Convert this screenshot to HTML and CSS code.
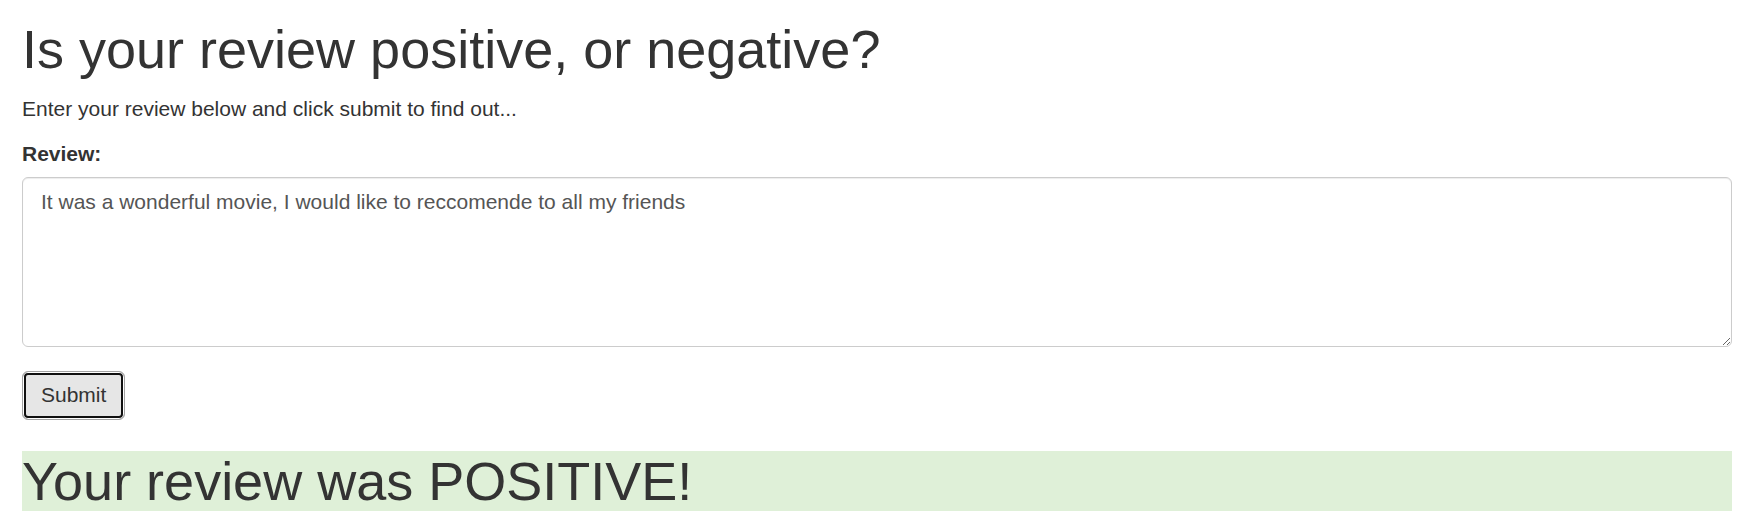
FILE: index.html
```html
<!DOCTYPE html>
<html lang="en">
<head>
<meta charset="utf-8">
<title>Review sentiment</title>
<link rel="stylesheet" href="styles.css">
</head>
<body>
<div class="container">
  <h1 class="title">Is your review positive, or negative?</h1>
  <p class="lead-text">Enter your review below and click submit to find out...</p>
  <form class="review-form">
    <div class="form-group">
      <label class="field-label" for="review">Review:</label>
      <textarea class="form-control" id="review" rows="5">It was a wonderful movie, I would like to reccomende to all my friends</textarea>
    </div>
    <button type="button" class="btn">Submit</button>
  </form>
  <h1 class="result">Your review was POSITIVE!</h1>
</div>
</body>
</html>
```
FILE: styles.css
```css
* {
  box-sizing: border-box;
}

html, body {
  margin: 0;
  padding: 0;
  background: #fff;
}

body {
  font-family: "Liberation Sans", Arial, Helvetica, sans-serif;
  font-size: 21px;
  line-height: 30px;
  color: #333;
}

.container {
  padding: 0 12px 0 22px;
}

.title {
  margin: 20px 0 15px;
  font-size: 54px;
  font-weight: 400;
  line-height: 59.4px;
  color: #333;
}

.lead-text {
  margin: 0 0 15px;
}

.review-form {
  margin: 0;
}

.form-group {
  margin-bottom: 24px;
}

.field-label {
  display: inline-block;
  margin-bottom: 7.5px;
  font-weight: 700;
}

.form-control {
  display: block;
  width: 100%;
  height: 170px;
  padding: 9px 18px;
  font-family: inherit;
  font-size: 21px;
  line-height: 30px;
  color: #555;
  background: #fff;
  border: 1px solid #ccc;
  border-radius: 6px;
  box-shadow: inset 0 1px 1px rgba(0, 0, 0, 0.075);
  resize: vertical;
  margin: 0;
}

.btn {
  display: inline-block;
  margin: 0;
  height: 49px;
  padding: 8px 18px;
  font-family: inherit;
  font-size: 21px;
  line-height: 30px;
  color: #333;
  background: #e6e6e6;
  border: 1px solid #a3a3a3;
  border-radius: 6px;
  box-shadow: inset 0 0 0 1px #fff, inset 0 0 0 3px #101010;
  cursor: pointer;
  vertical-align: top;
}

.result {
  margin: 31px 0 0;
  font-size: 54px;
  font-weight: 400;
  line-height: 60px;
  color: #333;
  background: #dff0d8;
}
```
